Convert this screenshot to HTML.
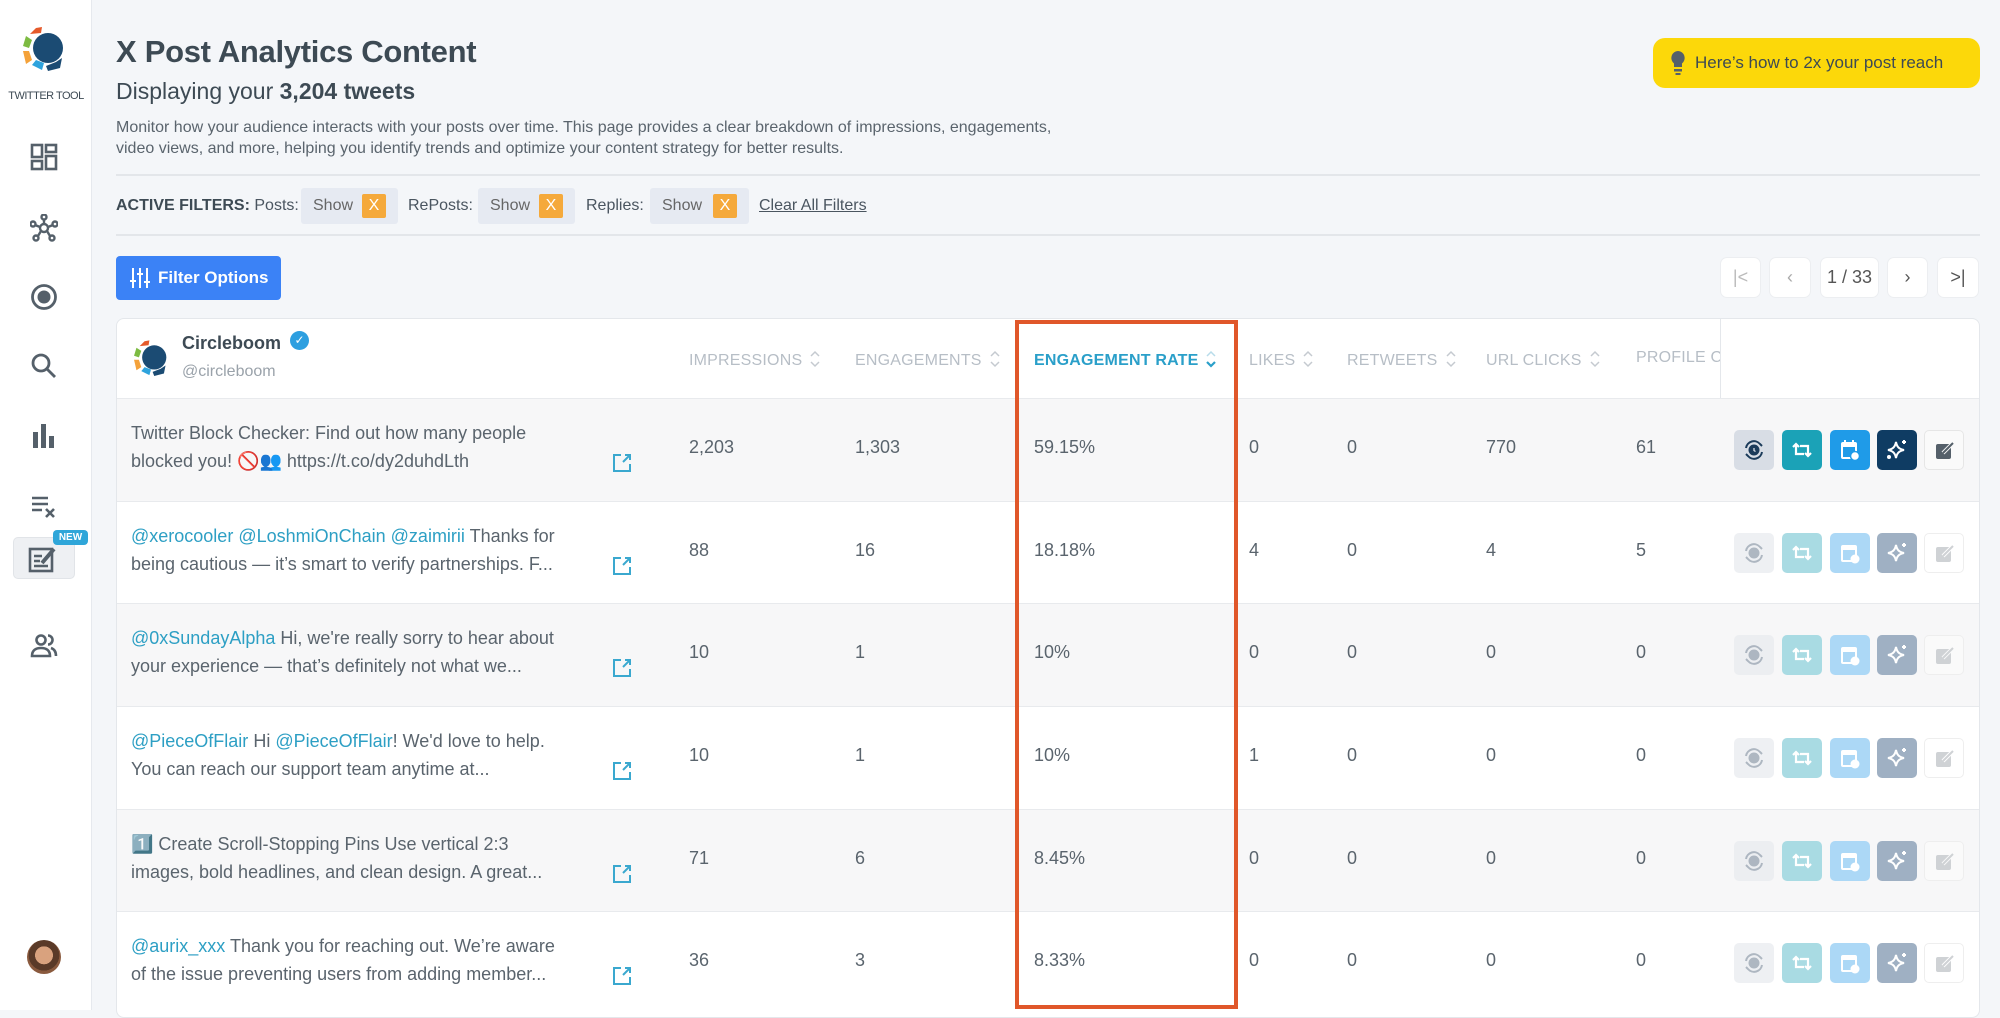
<!DOCTYPE html>
<html><head><meta charset="utf-8"><style>
*{box-sizing:border-box;margin:0;padding:0}
body{width:2000px;height:1010px;overflow:hidden;background:#f4f6f9;font-family:"Liberation Sans",sans-serif;color:#5a646d;position:relative}
.abs{position:absolute}
.side{left:0;top:0;width:92px;height:1010px;background:#fff;border-right:1px solid #e6e9ee}
.ic{position:absolute;left:30px;width:28px;height:28px}
h1{position:absolute;left:116px;top:34px;font-size:31px;font-weight:bold;color:#3d4a54;letter-spacing:-0.3px}
.sub{left:116px;top:78px;font-size:23px;color:#3d4a54}
.desc{left:116px;top:117px;font-size:16px;line-height:21px;color:#5a646d;width:1100px}
.hr{left:116px;width:1864px;height:2px;background:#e3e6ea}
.chip{top:188px;height:36px;background:#e6eaf2;border-radius:3px;font-size:16px;color:#666;padding:9px 0 0 12px}
.x{position:absolute;right:12px;top:6px;width:24px;height:24px;background:#f5a93b;color:#fff;font-size:16px;text-align:center;line-height:24px;border-radius:2px}
.fl{top:197px;font-size:16px;color:#4a5560}
.pg{top:257px;height:41px;background:#fff;border:1px solid #eceef1;border-radius:7px;text-align:center;line-height:39px;font-size:18px;color:#555}
.card{left:116px;top:318px;width:1864px;height:700px;background:#fff;border:1px solid #e4e7eb;border-radius:8px;overflow:hidden}
.th{top:349px;font-size:16px;color:#b7bec6;letter-spacing:0.2px}
.th svg{vertical-align:-4px;margin-left:8px}
.row{left:117px;width:1862px;height:103px;border-top:1px solid #e8eaed}
.t{position:absolute;left:14px;top:20px;font-size:18px;line-height:28px;color:#5a646d;width:500px;white-space:nowrap}
.m{color:#2d9fc4}
.n{position:absolute;top:38px;font-size:18px;color:#5a646d}
.ext{position:absolute;left:495px;top:54px}
.ab{position:absolute;top:31px;width:40px;height:40px;border-radius:5px}
.ab svg{position:absolute;left:8px;top:8px}
.dim svg{opacity:.55}
</style></head><body>
<div class="abs side">
  <svg class="abs" style="left:18px;top:24px" width="52" height="52" viewBox="0 0 52 52">
    <path d="M12 10 L18 4 L24 3 L23 9 Z" fill="#e55a2b"/>
    <path d="M5 22 L8 12 L14 16 L11 24 Z" fill="#7dbb42"/>
    <path d="M5 27 L11 27 L14 36 L8 40 Z" fill="#f4a23a"/>
    <path d="M14 41 L18 36 L26 39 L24 46 Z" fill="#2ea3dd"/>
    <circle cx="30" cy="24" r="15" fill="#1b4b73"/>
    <path d="M28 42 L38 38 L44 34 L42 44 L30 47 Z" fill="#1b4b73"/>
  </svg>
  <div class="abs" style="left:0;width:92px;top:90px;text-align:center;font-size:11px;color:#3d4a54;letter-spacing:-0.5px">TWITTER TOOL</div>
  <svg class="ic" style="top:143px" viewBox="0 0 28 28" fill="none" stroke="#55606a" stroke-width="2.6"><rect x="2" y="2" width="10" height="12"/><rect x="16" y="2" width="10" height="7"/><rect x="2" y="18" width="10" height="8"/><rect x="16" y="13" width="10" height="13"/></svg>
  <svg class="ic" style="top:214px" viewBox="0 0 28 28" fill="none" stroke="#55606a" stroke-width="2.4"><circle cx="14" cy="14" r="4"/><circle cx="14" cy="3" r="2.5"/><circle cx="3" cy="10" r="2.5"/><circle cx="25" cy="10" r="2.5"/><circle cx="6" cy="24" r="2.5"/><circle cx="22" cy="24" r="2.5"/><path d="M14 6v4M5 11l5 2M23 11l-5 2M8 22l3-5M20 22l-3-5"/></svg>
  <svg class="ic" style="top:283px" viewBox="0 0 28 28"><circle cx="14" cy="14" r="11.5" fill="none" stroke="#55606a" stroke-width="2.8"/><circle cx="14" cy="14" r="6.5" fill="#55606a"/></svg>
  <svg class="ic" style="top:352px" viewBox="0 0 28 28" fill="none" stroke="#55606a" stroke-width="2.8"><circle cx="11" cy="11" r="8"/><path d="M17 17l8 8"/></svg>
  <svg class="ic" style="top:422px" viewBox="0 0 28 28" fill="#55606a"><rect x="3" y="10" width="5" height="16"/><rect x="11" y="2" width="5" height="24"/><rect x="19" y="14" width="5" height="12"/></svg>
  <svg class="ic" style="top:493px" viewBox="0 0 28 28" fill="none" stroke="#55606a" stroke-width="2.6"><path d="M2 5h16M2 11h16M2 17h10M16 16l8 8M24 16l-8 8"/></svg>
  <div class="abs" style="left:13px;top:537px;width:62px;height:42px;background:#eef0f3;border:1px solid #e1e4e8;border-radius:5px"></div>
  <svg class="abs" style="left:28px;top:545px" width="30" height="28" viewBox="0 0 30 28" fill="none" stroke="#55606a" stroke-width="2.6"><rect x="2" y="4" width="22" height="22"/><path d="M6 11h8M6 16h6M6 21h14"/><path d="M14 18l12-14" stroke-width="4"/></svg>
  <div class="abs" style="left:53px;top:530px;width:35px;height:15px;background:#2fa6d9;border-radius:4px;color:#fff;font-size:10px;font-weight:bold;text-align:center;line-height:15px">NEW</div>
  <svg class="ic" style="top:631px" viewBox="0 0 28 28" fill="none" stroke="#55606a" stroke-width="2.6"><circle cx="11" cy="9" r="4.5"/><path d="M2 25c0-6 4-8 9-8s9 2 9 8z"/><path d="M18 4.5a4.5 4.5 0 0 1 0 9M21 17c3 1 5 3 5 8"/></svg>
  <div class="abs" style="left:27px;top:940px;width:34px;height:34px;border-radius:50%;background:radial-gradient(circle at 50% 45%,#d9a27e 0 35%,#5a3a28 36% 60%,#8a5a3e 61%)"></div>
</div>

<h1>X Post Analytics Content</h1>
<div class="abs sub">Displaying your <b>3,204 tweets</b></div>
<div class="abs desc">Monitor how your audience interacts with your posts over time. This page provides a clear breakdown of impressions, engagements,<br>video views, and more, helping you identify trends and optimize your content strategy for better results.</div>
<div class="abs" style="left:1653px;top:38px;width:327px;height:50px;background:#fcd80a;border-radius:12px;font-size:17px;color:#3d4a54;line-height:50px;padding-left:42px">Here’s how to 2x your post reach</div>
<svg class="abs" style="left:1670px;top:50px" width="16" height="26" viewBox="0 0 16 26"><path d="M8 1a7 7 0 0 0-4 12.5V17h8v-3.5A7 7 0 0 0 8 1z" fill="#55606a"/><rect x="4" y="19" width="8" height="2.5" fill="#55606a"/><rect x="5.5" y="23" width="5" height="2" fill="#55606a"/></svg>

<div class="abs hr" style="top:174px"></div>
<div class="abs fl" style="left:116px"><b style="color:#3d4a54">ACTIVE FILTERS:</b> Posts:</div>
<div class="abs chip" style="left:301px;width:97px">Show<div class="x">X</div></div>
<div class="abs fl" style="left:408px">RePosts:</div>
<div class="abs chip" style="left:478px;width:97px">Show<div class="x">X</div></div>
<div class="abs fl" style="left:586px">Replies:</div>
<div class="abs chip" style="left:650px;width:99px">Show<div class="x">X</div></div>
<div class="abs fl" style="left:759px;text-decoration:underline;color:#4a5560">Clear All Filters</div>
<div class="abs hr" style="top:234px"></div>

<div class="abs" style="left:116px;top:256px;width:165px;height:44px;background:#3b82f6;border-radius:4px;color:#fff;font-size:17px;font-weight:bold;line-height:44px;padding-left:42px">Filter Options</div>
<svg class="abs" style="left:129px;top:267px" width="22" height="22" viewBox="0 0 22 22" stroke="#fff" stroke-width="2"><path d="M4 1v20M11 1v20M18 1v20"/><path d="M1 14h6M8 7h6M15 15h6"/></svg>

<div class="abs pg" style="left:1720px;width:41px;color:#bbb">|&lt;</div>
<div class="abs pg" style="left:1769px;width:42px;color:#aaa">&lsaquo;</div>
<div class="abs pg" style="left:1820px;width:59px">1 / 33</div>
<div class="abs pg" style="left:1887px;width:41px">&rsaquo;</div>
<div class="abs pg" style="left:1937px;width:42px">&gt;|</div>

<div class="abs card"></div>
<div class="abs" style="left:1720px;top:319px;width:1px;height:691px;background:#e4e7eb"></div>
<svg class="abs" style="left:130px;top:338px" width="42" height="42" viewBox="0 0 52 52">
  <path d="M12 10 L18 4 L24 3 L23 9 Z" fill="#e55a2b"/><path d="M5 22 L8 12 L14 16 L11 24 Z" fill="#7dbb42"/><path d="M5 27 L11 27 L14 36 L8 40 Z" fill="#f4a23a"/><path d="M14 41 L18 36 L26 39 L24 46 Z" fill="#2ea3dd"/><circle cx="30" cy="24" r="15" fill="#1b4b73"/><path d="M28 42 L38 38 L44 34 L42 44 L30 47 Z" fill="#1b4b73"/></svg>
<div class="abs" style="left:182px;top:333px;font-size:18px;font-weight:bold;color:#3d4a54">Circleboom</div>
<div class="abs" style="left:290px;top:331px;width:19px;height:19px;border-radius:50%;background:#2d9fe0;color:#fff;font-size:12px;text-align:center;line-height:19px">✓</div>
<div class="abs" style="left:182px;top:363px;font-size:16px;color:#9aa2aa">@circleboom</div>
<div class="abs th" style="left:689px">IMPRESSIONS<svg width="10" height="20" viewBox="0 0 10 20" fill="none" stroke="#c5cad0" stroke-width="1.5"><path d="M1 7l4-4 4 4M1 13l4 4 4-4"/></svg></div>
<div class="abs th" style="left:855px">ENGAGEMENTS<svg width="10" height="20" viewBox="0 0 10 20" fill="none" stroke="#c5cad0" stroke-width="1.5"><path d="M1 7l4-4 4 4M1 13l4 4 4-4"/></svg></div>
<div class="abs th" style="left:1034px;color:#2a9fc9;font-weight:bold">ENGAGEMENT RATE<svg width="10" height="20" viewBox="0 0 10 20" fill="none" stroke="#2a9fc9" stroke-width="1.5"><path d="M1 7l4-4 4 4" stroke="#b8dcea"/><path d="M1 13l4 4 4-4" stroke-width="2.2"/></svg></div>
<div class="abs th" style="left:1249px">LIKES<svg width="10" height="20" viewBox="0 0 10 20" fill="none" stroke="#c5cad0" stroke-width="1.5"><path d="M1 7l4-4 4 4M1 13l4 4 4-4"/></svg></div>
<div class="abs th" style="left:1347px">RETWEETS<svg width="10" height="20" viewBox="0 0 10 20" fill="none" stroke="#c5cad0" stroke-width="1.5"><path d="M1 7l4-4 4 4M1 13l4 4 4-4"/></svg></div>
<div class="abs th" style="left:1486px">URL CLICKS<svg width="10" height="20" viewBox="0 0 10 20" fill="none" stroke="#c5cad0" stroke-width="1.5"><path d="M1 7l4-4 4 4M1 13l4 4 4-4"/></svg></div>
<div class="abs th" style="left:1636px;width:84px;overflow:hidden;white-space:nowrap">PROFILE CLICKS</div>

<!-- rows -->
<div class="abs row" style="top:398px;background:#f7f7f8"><div class="t">Twitter Block Checker: Find out how many people<br>blocked you! 🚫👥 https://t.co/dy2duhdLth</div><svg class="ext" width="20" height="20" viewBox="0 0 20 20" fill="none" stroke="#3aa8cf" stroke-width="2"><path d="M9 2H2v16h16v-7"/><path d="M11 9l7-7M13 2h5v5"/></svg>
<div class="n" style="left:572px">2,203</div><div class="n" style="left:738px">1,303</div><div class="n" style="left:917px">59.15%</div><div class="n" style="left:1132px">0</div><div class="n" style="left:1230px">0</div><div class="n" style="left:1369px">770</div><div class="n" style="left:1519px">61</div>
<div class="ab" style="left:1617px;background:#d8dde5"><svg width="24" height="24" viewBox="0 0 24 24" fill="none" stroke="#1b3b5a" stroke-width="2"><path d="M4 10a8 8 0 0 1 14-4l2 2M20 14a8 8 0 0 1-14 4l-2-2"/><circle cx="12" cy="12" r="4.5" fill="#1b3b5a"/><path d="M12 10v2.5l1.5 1" stroke="#d8dde5" stroke-width="1.3"/></svg></div>
<div class="ab" style="left:1665px;background:#1ba2b7"><svg width="24" height="24" viewBox="0 0 24 24" fill="none" stroke="#fff" stroke-width="2.2"><path d="M3 9l3-3 3 3M6 6v10h8M21 15l-3 3-3-3M18 18V8h-8"/></svg></div>
<div class="ab" style="left:1713px;background:#1f9be8"><svg width="24" height="24" viewBox="0 0 24 24" fill="#fff"><rect x="3" y="4" width="16" height="17" rx="2"/><rect x="5" y="9" width="12" height="10" fill="#1f9be8"/><circle cx="17" cy="18" r="4.5" stroke="#1f9be8" stroke-width="1.5"/><rect x="6" y="2" width="2" height="4"/><rect x="14" y="2" width="2" height="4"/></svg></div>
<div class="ab" style="left:1760px;background:#0f3c63"><svg width="24" height="24" viewBox="0 0 24 24" fill="none" stroke="#fff" stroke-width="2"><path d="M11 4c1 5 3 7 8 8-5 1-7 3-8 8-1-5-3-7-8-8 5-1 7-3 8-8z"/><path d="M19 2v4M17 4h4"/><circle cx="4" cy="19" r="1" fill="#fff"/></svg></div>
<div class="ab" style="left:1807px;background:#fafafa;border:1px solid #e6e6e6"><svg width="24" height="24" viewBox="0 0 24 24"><rect x="3" y="5" width="15" height="15" rx="2" fill="#55606a"/><path d="M10 14l10-10" stroke="#fafafa" stroke-width="4"/><path d="M10 14l10-10" stroke="#55606a" stroke-width="2"/></svg></div></div>

<div class="abs row" style="top:501px;background:#fff"><div class="t"><span class="m">@xerocooler @LoshmiOnChain @zaimirii</span> Thanks for<br>being cautious — it’s smart to verify partnerships. F...</div><svg class="ext" width="20" height="20" viewBox="0 0 20 20" fill="none" stroke="#3aa8cf" stroke-width="2"><path d="M9 2H2v16h16v-7"/><path d="M11 9l7-7M13 2h5v5"/></svg>
<div class="n" style="left:572px">88</div><div class="n" style="left:738px">16</div><div class="n" style="left:917px">18.18%</div><div class="n" style="left:1132px">4</div><div class="n" style="left:1230px">0</div><div class="n" style="left:1369px">4</div><div class="n" style="left:1519px">5</div>
<div class="ab dim" style="left:1617px;background:#eef0f3"><svg width="24" height="24" viewBox="0 0 24 24" fill="none" stroke="#7a8a9a" stroke-width="2"><path d="M4 10a8 8 0 0 1 14-4l2 2M20 14a8 8 0 0 1-14 4l-2-2"/><circle cx="12" cy="12" r="4.5" fill="#7a8a9a"/></svg></div>
<div class="ab" style="left:1665px;background:#a9dbe3"><svg width="24" height="24" viewBox="0 0 24 24" fill="none" stroke="#fff" stroke-width="2.2"><path d="M3 9l3-3 3 3M6 6v10h8M21 15l-3 3-3-3M18 18V8h-8"/></svg></div>
<div class="ab" style="left:1713px;background:#acd8f6"><svg width="24" height="24" viewBox="0 0 24 24" fill="#fff"><rect x="3" y="4" width="16" height="17" rx="2"/><rect x="5" y="9" width="12" height="10" fill="#acd8f6"/><circle cx="17" cy="18" r="4.5"/></svg></div>
<div class="ab" style="left:1760px;background:#9fb0c3"><svg width="24" height="24" viewBox="0 0 24 24" fill="none" stroke="#fff" stroke-width="2"><path d="M11 4c1 5 3 7 8 8-5 1-7 3-8 8-1-5-3-7-8-8 5-1 7-3 8-8z"/><path d="M19 2v4M17 4h4"/></svg></div>
<div class="ab" style="left:1807px;background:#fff;border:1px solid #eee"><svg width="24" height="24" viewBox="0 0 24 24"><rect x="3" y="5" width="15" height="15" rx="2" fill="#cfd2d5"/><path d="M10 14l10-10" stroke="#fff" stroke-width="4"/><path d="M10 14l10-10" stroke="#cfd2d5" stroke-width="2"/></svg></div></div>

<div class="abs row" style="top:603px;background:#f7f7f8"><div class="t"><span class="m">@0xSundayAlpha</span> Hi, we're really sorry to hear about<br>your experience — that’s definitely not what we...</div><svg class="ext" width="20" height="20" viewBox="0 0 20 20" fill="none" stroke="#3aa8cf" stroke-width="2"><path d="M9 2H2v16h16v-7"/><path d="M11 9l7-7M13 2h5v5"/></svg>
<div class="n" style="left:572px">10</div><div class="n" style="left:738px">1</div><div class="n" style="left:917px">10%</div><div class="n" style="left:1132px">0</div><div class="n" style="left:1230px">0</div><div class="n" style="left:1369px">0</div><div class="n" style="left:1519px">0</div>
<div class="ab dim" style="left:1617px;background:#eceef1"><svg width="24" height="24" viewBox="0 0 24 24" fill="none" stroke="#7a8a9a" stroke-width="2"><path d="M4 10a8 8 0 0 1 14-4l2 2M20 14a8 8 0 0 1-14 4l-2-2"/><circle cx="12" cy="12" r="4.5" fill="#7a8a9a"/></svg></div>
<div class="ab" style="left:1665px;background:#a9dbe3"><svg width="24" height="24" viewBox="0 0 24 24" fill="none" stroke="#fff" stroke-width="2.2"><path d="M3 9l3-3 3 3M6 6v10h8M21 15l-3 3-3-3M18 18V8h-8"/></svg></div>
<div class="ab" style="left:1713px;background:#acd8f6"><svg width="24" height="24" viewBox="0 0 24 24" fill="#fff"><rect x="3" y="4" width="16" height="17" rx="2"/><rect x="5" y="9" width="12" height="10" fill="#acd8f6"/><circle cx="17" cy="18" r="4.5"/></svg></div>
<div class="ab" style="left:1760px;background:#9fb0c3"><svg width="24" height="24" viewBox="0 0 24 24" fill="none" stroke="#fff" stroke-width="2"><path d="M11 4c1 5 3 7 8 8-5 1-7 3-8 8-1-5-3-7-8-8 5-1 7-3 8-8z"/><path d="M19 2v4M17 4h4"/></svg></div>
<div class="ab" style="left:1807px;background:#fafafa;border:1px solid #eee"><svg width="24" height="24" viewBox="0 0 24 24"><rect x="3" y="5" width="15" height="15" rx="2" fill="#cfd2d5"/><path d="M10 14l10-10" stroke="#fafafa" stroke-width="4"/><path d="M10 14l10-10" stroke="#cfd2d5" stroke-width="2"/></svg></div></div>

<div class="abs row" style="top:706px;background:#fff"><div class="t"><span class="m">@PieceOfFlair</span> Hi <span class="m">@PieceOfFlair</span>! We'd love to help.<br>You can reach our support team anytime at...</div><svg class="ext" width="20" height="20" viewBox="0 0 20 20" fill="none" stroke="#3aa8cf" stroke-width="2"><path d="M9 2H2v16h16v-7"/><path d="M11 9l7-7M13 2h5v5"/></svg>
<div class="n" style="left:572px">10</div><div class="n" style="left:738px">1</div><div class="n" style="left:917px">10%</div><div class="n" style="left:1132px">1</div><div class="n" style="left:1230px">0</div><div class="n" style="left:1369px">0</div><div class="n" style="left:1519px">0</div>
<div class="ab dim" style="left:1617px;background:#eef0f3"><svg width="24" height="24" viewBox="0 0 24 24" fill="none" stroke="#7a8a9a" stroke-width="2"><path d="M4 10a8 8 0 0 1 14-4l2 2M20 14a8 8 0 0 1-14 4l-2-2"/><circle cx="12" cy="12" r="4.5" fill="#7a8a9a"/></svg></div>
<div class="ab" style="left:1665px;background:#a9dbe3"><svg width="24" height="24" viewBox="0 0 24 24" fill="none" stroke="#fff" stroke-width="2.2"><path d="M3 9l3-3 3 3M6 6v10h8M21 15l-3 3-3-3M18 18V8h-8"/></svg></div>
<div class="ab" style="left:1713px;background:#acd8f6"><svg width="24" height="24" viewBox="0 0 24 24" fill="#fff"><rect x="3" y="4" width="16" height="17" rx="2"/><rect x="5" y="9" width="12" height="10" fill="#acd8f6"/><circle cx="17" cy="18" r="4.5"/></svg></div>
<div class="ab" style="left:1760px;background:#9fb0c3"><svg width="24" height="24" viewBox="0 0 24 24" fill="none" stroke="#fff" stroke-width="2"><path d="M11 4c1 5 3 7 8 8-5 1-7 3-8 8-1-5-3-7-8-8 5-1 7-3 8-8z"/><path d="M19 2v4M17 4h4"/></svg></div>
<div class="ab" style="left:1807px;background:#fff;border:1px solid #eee"><svg width="24" height="24" viewBox="0 0 24 24"><rect x="3" y="5" width="15" height="15" rx="2" fill="#cfd2d5"/><path d="M10 14l10-10" stroke="#fff" stroke-width="4"/><path d="M10 14l10-10" stroke="#cfd2d5" stroke-width="2"/></svg></div></div>

<div class="abs row" style="top:809px;background:#f7f7f8"><div class="t">1️⃣ Create Scroll-Stopping Pins Use vertical 2:3<br>images, bold headlines, and clean design. A great...</div><svg class="ext" width="20" height="20" viewBox="0 0 20 20" fill="none" stroke="#3aa8cf" stroke-width="2"><path d="M9 2H2v16h16v-7"/><path d="M11 9l7-7M13 2h5v5"/></svg>
<div class="n" style="left:572px">71</div><div class="n" style="left:738px">6</div><div class="n" style="left:917px">8.45%</div><div class="n" style="left:1132px">0</div><div class="n" style="left:1230px">0</div><div class="n" style="left:1369px">0</div><div class="n" style="left:1519px">0</div>
<div class="ab dim" style="left:1617px;background:#eceef1"><svg width="24" height="24" viewBox="0 0 24 24" fill="none" stroke="#7a8a9a" stroke-width="2"><path d="M4 10a8 8 0 0 1 14-4l2 2M20 14a8 8 0 0 1-14 4l-2-2"/><circle cx="12" cy="12" r="4.5" fill="#7a8a9a"/></svg></div>
<div class="ab" style="left:1665px;background:#a9dbe3"><svg width="24" height="24" viewBox="0 0 24 24" fill="none" stroke="#fff" stroke-width="2.2"><path d="M3 9l3-3 3 3M6 6v10h8M21 15l-3 3-3-3M18 18V8h-8"/></svg></div>
<div class="ab" style="left:1713px;background:#acd8f6"><svg width="24" height="24" viewBox="0 0 24 24" fill="#fff"><rect x="3" y="4" width="16" height="17" rx="2"/><rect x="5" y="9" width="12" height="10" fill="#acd8f6"/><circle cx="17" cy="18" r="4.5"/></svg></div>
<div class="ab" style="left:1760px;background:#9fb0c3"><svg width="24" height="24" viewBox="0 0 24 24" fill="none" stroke="#fff" stroke-width="2"><path d="M11 4c1 5 3 7 8 8-5 1-7 3-8 8-1-5-3-7-8-8 5-1 7-3 8-8z"/><path d="M19 2v4M17 4h4"/></svg></div>
<div class="ab" style="left:1807px;background:#fafafa;border:1px solid #eee"><svg width="24" height="24" viewBox="0 0 24 24"><rect x="3" y="5" width="15" height="15" rx="2" fill="#cfd2d5"/><path d="M10 14l10-10" stroke="#fafafa" stroke-width="4"/><path d="M10 14l10-10" stroke="#cfd2d5" stroke-width="2"/></svg></div></div>

<div class="abs row" style="top:911px;background:#fff;height:99px"><div class="t"><span class="m">@aurix_xxx</span> Thank you for reaching out. We’re aware<br>of the issue preventing users from adding member...</div><svg class="ext" width="20" height="20" viewBox="0 0 20 20" fill="none" stroke="#3aa8cf" stroke-width="2"><path d="M9 2H2v16h16v-7"/><path d="M11 9l7-7M13 2h5v5"/></svg>
<div class="n" style="left:572px">36</div><div class="n" style="left:738px">3</div><div class="n" style="left:917px">8.33%</div><div class="n" style="left:1132px">0</div><div class="n" style="left:1230px">0</div><div class="n" style="left:1369px">0</div><div class="n" style="left:1519px">0</div>
<div class="ab dim" style="left:1617px;background:#eef0f3"><svg width="24" height="24" viewBox="0 0 24 24" fill="none" stroke="#7a8a9a" stroke-width="2"><path d="M4 10a8 8 0 0 1 14-4l2 2M20 14a8 8 0 0 1-14 4l-2-2"/><circle cx="12" cy="12" r="4.5" fill="#7a8a9a"/></svg></div>
<div class="ab" style="left:1665px;background:#a9dbe3"><svg width="24" height="24" viewBox="0 0 24 24" fill="none" stroke="#fff" stroke-width="2.2"><path d="M3 9l3-3 3 3M6 6v10h8M21 15l-3 3-3-3M18 18V8h-8"/></svg></div>
<div class="ab" style="left:1713px;background:#acd8f6"><svg width="24" height="24" viewBox="0 0 24 24" fill="#fff"><rect x="3" y="4" width="16" height="17" rx="2"/><rect x="5" y="9" width="12" height="10" fill="#acd8f6"/><circle cx="17" cy="18" r="4.5"/></svg></div>
<div class="ab" style="left:1760px;background:#9fb0c3"><svg width="24" height="24" viewBox="0 0 24 24" fill="none" stroke="#fff" stroke-width="2"><path d="M11 4c1 5 3 7 8 8-5 1-7 3-8 8-1-5-3-7-8-8 5-1 7-3 8-8z"/><path d="M19 2v4M17 4h4"/></svg></div>
<div class="ab" style="left:1807px;background:#fff;border:1px solid #eee"><svg width="24" height="24" viewBox="0 0 24 24"><rect x="3" y="5" width="15" height="15" rx="2" fill="#cfd2d5"/><path d="M10 14l10-10" stroke="#fff" stroke-width="4"/><path d="M10 14l10-10" stroke="#cfd2d5" stroke-width="2"/></svg></div></div>

<div class="abs" style="left:1015px;top:320px;width:223px;height:689px;border:4px solid #e0572a"></div>
</body></html>
